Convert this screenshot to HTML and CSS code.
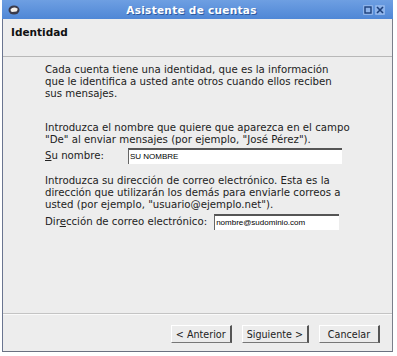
FILE: index.html
```html
<!DOCTYPE html>
<html>
<head>
    <meta charset="UTF-8">
    <title>Asistente de cuentas</title>
    <link rel="stylesheet" href="styles.css">
</head>
<body>
    <div class="window">
        <div class="titlebar">
            <svg class="app-icon" width="12" height="10" viewBox="0 0 12 10">
                <ellipse cx="6" cy="5" rx="5.5" ry="4.5" fill="#3a3a4a"/>
                <path d="M2.5 4.5 Q4 2 7 2.5 L9.5 3.5 Q10 5 8.5 6.5 L4 7 Q2.5 6.5 2.5 4.5Z" fill="#f4f0ea"/>
            </svg>
            <span class="title">Asistente de cuentas</span>
            <div class="win-buttons">
                <span class="win-btn"><svg width="8" height="8" viewBox="0 0 8 8"><rect x="1" y="1" width="6" height="6" fill="none" stroke="#1c3f7a" stroke-width="1.4"/></svg></span>
                <span class="win-btn"><svg width="8" height="8" viewBox="0 0 8 8"><path d="M1 1 L7 7 M7 1 L1 7" stroke="#1c3f7a" stroke-width="1.6"/></svg></span>
            </div>
        </div>

        <div class="header">Identidad</div>

        <div class="content">
            <p>Cada cuenta tiene una identidad, que es la información<br>que le identifica a usted ante otros cuando ellos reciben<br>sus mensajes.</p>

            <p class="gap">Introduzca el nombre que quiere que aparezca en el campo<br>"De" al enviar mensajes (por ejemplo, "José Pérez").</p>

            <div class="field-row">
                <label class="name-label"><u>S</u>u nombre:</label>
                <div class="entry name-entry">SU NOMBRE</div>
            </div>

            <p class="gap-small">Introduzca su dirección de correo electrónico. Esta es la<br>dirección que utilizarán los demás para enviarle correos a<br>usted (por ejemplo, "usuario@ejemplo.net").</p>

            <div class="field-row mail-row">
                <label>Dir<u>e</u>cción de correo electrónico:</label>
                <div class="entry mail-entry">nombre@sudominio.com</div>
            </div>
        </div>

        <div class="footer">
            <button class="btn">&lt; Anterior</button>
            <button class="btn">Siguiente &gt;</button>
            <button class="btn btn-cancel">Cancelar</button>
        </div>
    </div>
</body>
</html>
```

FILE: styles.css
```css
body {
    margin: 0;
    background-color: #fff;
    font-family: 'DejaVu Sans', sans-serif;
    font-size: 10.2px;
    color: #222;
}
.window {
    margin-left: 2px;
    width: 389px;
    height: 351px;
    display: flex;
    flex-direction: column;
    background-color: #ededed;
    border-left: 1px solid #6a7590;
    border-right: 1px solid #7a7f8a;
    border-bottom: 1px solid #6a7080;
}
.titlebar {
    height: 19px;
    margin-left: -1px;
    margin-right: -1px;
    display: flex;
    align-items: center;
    background: linear-gradient(#6e9fe2, #4f87d6);
    color: #fff;
}
.app-icon {
    margin-left: 6px;
}
.title {
    flex: 1;
    text-align: center;
    font-weight: bold;
    font-size: 10.5px;
    letter-spacing: 0.3px;
    text-shadow: 1px 1px 0 #2c5aa0;
}
.win-buttons {
    display: flex;
    gap: 2px;
    margin-right: 8px;
}
.win-btn {
    width: 10px;
    height: 10px;
    display: flex;
    align-items: center;
    justify-content: center;
    background-color: #8db3ea;
    border-radius: 1px;
}
.header {
    height: 38px;
    padding-left: 8px;
    padding-top: 7px;
    box-sizing: border-box;
    font-weight: bold;
    font-size: 10.5px;
    color: #111;
    border-bottom: 1px solid #b8b8b8;
}
.content {
    flex: 1;
    padding: 7px 0 0 42px;
    line-height: 11.8px;
}
.content p {
    margin: 0;
}
.content .gap {
    margin-top: 23px;
}
.content .gap-small {
    margin-top: 11px;
}
.field-row {
    display: flex;
    align-items: center;
    margin-top: 2px;
}
.field-row.mail-row {
    margin-top: 4px;
}
.name-label {
    width: 83px;
}
.entry {
    height: 16px;
    box-sizing: border-box;
    background-color: #fff;
    border-top: 2px solid #555;
    border-left: 1px solid #666;
    font-family: 'Liberation Sans', Arial, sans-serif;
    font-size: 8px;
    color: #000;
    line-height: 13px;
    padding-left: 1px;
}
.name-entry {
    width: 214px;
}
.mail-entry {
    width: 125px;
    margin-left: 7px;
}
.footer {
    height: 38px;
    display: flex;
    justify-content: flex-end;
    align-items: flex-start;
    gap: 10px;
    padding: 11px 12px 0 0;
    box-sizing: border-box;
    border-top: 1px solid #c4c4c4;
    box-shadow: inset 0 1px 0 #fafafa;
}
.btn {
    height: 18px;
    padding: 0 4px;
    font-family: 'DejaVu Sans', sans-serif;
    font-size: 9.6px;
    color: #222;
    background-color: #ececec;
    border: none;
    border-right: 2px solid #555;
    border-bottom: 1px solid #777;
    border-top: 1px solid #fff;
    border-left: 1px solid #fff;
}
.btn-cancel {
    width: 61px;
}
```
